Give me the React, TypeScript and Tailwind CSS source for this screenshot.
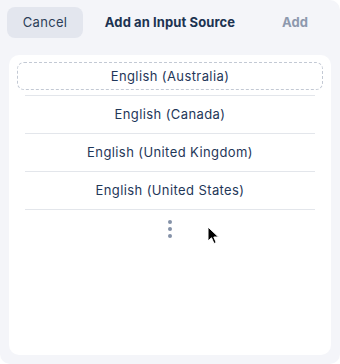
const languages = [
    'English (Australia)',
    'English (Canada)',
    'English (United Kingdom)',
    'English (United States)',
];

export default function App() {
    return (
        <div className="w-[340px] h-[364px] bg-white" style={{ fontFamily: 'Inter, "Noto Sans", sans-serif' }}>
            <div className="w-full h-full bg-[#f4f5f9] rounded-tr-[10px] rounded-b-[10px] flex flex-col">
                {/* header */}
                <div className="flex items-center justify-between px-[7px] pt-[7px]">
                    <button className="w-[76px] h-[31px] rounded-[8px] bg-[#e3e6ee] text-[13px] tracking-[0.3px] text-[#2c3e58]">
                        Cancel
                    </button>
                    <h2 className="text-[13px] font-bold tracking-[0.1px] text-[#1c3351]">Add an Input Source</h2>
                    <button className="w-[76px] h-[31px] text-[13px] font-bold text-[#8d99ae]">
                        Add
                    </button>
                </div>

                {/* list */}
                <div className="mx-[9px] mt-[17px] h-[300px] bg-white rounded-[10px] px-[8px] pt-[7px]">
                    {languages.map((lang, i) => (
                        <div key={lang}>
                            <div
                                className={
                                    i === 0
                                        ? 'h-[28px] pt-[2px] flex items-center justify-center rounded-[7px] border border-dashed border-[#c3c9d4] text-[13px] tracking-[0.4px] text-[#1f3759]'
                                        : 'h-[28px] pt-[2px] flex items-center justify-center text-[13px] tracking-[0.4px] text-[#1f3759]'
                                }
                            >
                                {lang}
                            </div>
                            <div className="mx-[8px] mt-[5px] mb-[4px] h-px bg-[#e3e6eb]" />
                        </div>
                    ))}
                    <div className="relative flex justify-center pt-[6px]">
                        <div className="flex flex-col items-center gap-[3px]">
                            <span className="w-[4px] h-[4px] rounded-full bg-[#8592a8]" />
                            <span className="w-[4px] h-[4px] rounded-full bg-[#8592a8]" />
                            <span className="w-[4px] h-[4px] rounded-full bg-[#8592a8]" />
                        </div>
                        {/* mouse pointer */}
                        <svg className="absolute left-[190px] top-[12px]" width="13" height="19" viewBox="0 0 13 19">
                            <path d="M1 1 L1 15 L4.5 11.8 L7 17.5 L9.2 16.5 L6.8 11 L11.5 11 Z" fill="#000" stroke="#fff" strokeWidth="1" strokeLinejoin="round" />
                        </svg>
                    </div>
                </div>
            </div>
        </div>
    );
}
